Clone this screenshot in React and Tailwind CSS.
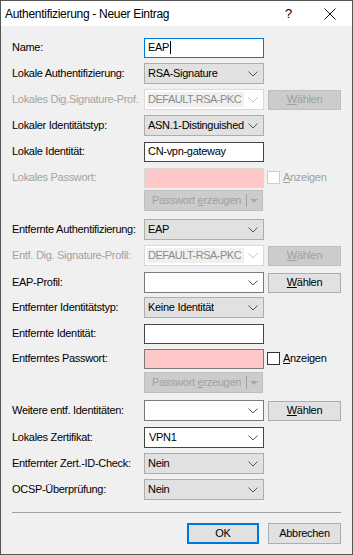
import React from 'react';

const font = { fontFamily: '"Liberation Sans", Arial, sans-serif' };

const Chevron = ({ light }) => (
  <svg width="10" height="6" viewBox="0 0 10 6" className="shrink-0">
    <path d="M0.5 0.5 L5 5 L9.5 0.5" fill="none" stroke={light ? '#c4c4c4' : '#555'} strokeWidth="1" />
  </svg>
);

const Label = ({ children, disabled }) => (
  <div className={`w-[132px] shrink-0 text-[11px] leading-none whitespace-nowrap ${disabled ? 'text-[#a3a3a3]' : 'text-black'}`}>
    {children}
  </div>
);

// grauer Combo (nur auswahl)
const Combo = ({ value }) => (
  <div className="w-[120px] h-full flex items-center justify-between bg-[#e1e1e1] border border-[#adadad] pl-[3px] pr-[5px] text-[11px] text-black">
    <span className="whitespace-nowrap">{value}</span>
    <Chevron />
  </div>
);

// weisser Combo (editierbar)
const EditCombo = ({ value, dark }) => (
  <div className={`w-[120px] h-full flex items-center justify-between bg-white border ${dark ? 'border-[#444]' : 'border-[#7a7a7a]'} pl-[4px] pr-[5px] text-[11px] text-black`}>
    <span className="whitespace-nowrap">{value}</span>
    <Chevron />
  </div>
);

const DisabledCombo = ({ value }) => (
  <div className="w-[120px] h-full flex items-center bg-white border border-[#d9d9d9] p-[2px] pr-[5px] text-[11px]">
    <div className="w-[97px] h-full flex items-center bg-[#f0f0f0] pl-[1px] text-[#8c8c8c] whitespace-nowrap tracking-[-0.5px]">{value}</div>
    <div className="ml-auto"><Chevron light /></div>
  </div>
);

const TextInput = ({ value, focus }) => (
  <div className={`w-[120px] h-[20px] flex items-center bg-white border ${focus ? 'border-[#0078d7]' : 'border-[#444]'} pl-[3px] text-[11px] text-black whitespace-nowrap`}>
    {value}
    {focus && <span className="w-px h-[13px] bg-black ml-[1px]" />}
  </div>
);

const Wählen = ({ disabled }) => (
  <div className={`ml-[4px] w-[73px] h-[20px] flex items-center justify-center border text-[11px] ${disabled ? 'bg-[#cccccc] border-[#bfbfbf] text-[#a0a0a0]' : 'bg-[#e1e1e1] border-[#adadad] text-black'}`}>
    <span><span className="underline">W</span>ählen</span>
  </div>
);

const Password = ({ disabled }) => (
  <div className={`w-[120px] h-[20px] bg-[#ffc8c8] border ${disabled ? 'border-[#d9d9d9]' : 'border-[#7a7a7a]'}`} />
);

const Anzeigen = ({ disabled }) => (
  <div className="flex items-center ml-[3px]">
    <div className={`w-[13px] h-[13px] bg-white border ${disabled ? 'border-[#cccccc]' : 'border-[#333]'}`} />
    <span className={`ml-[3px] text-[11px] ${disabled ? 'text-[#a0a0a0]' : 'text-black'}`}>
      <span className="underline">A</span>nzeigen
    </span>
  </div>
);

const Erzeugen = () => (
  <div className="w-[119px] h-[21px] flex items-center bg-[#cccccc] border border-[#bfbfbf] text-[11px] text-[#a0a0a0]">
    <span className="flex-1 text-center pl-[2px] whitespace-nowrap">Passwort <span className="underline">e</span>rzeugen</span>
    <span className="w-px h-[13px] bg-[#a0a0a0]" />
    <svg width="15" height="8" viewBox="0 0 15 8"><path d="M3 2 L11 2 L7 6 Z" fill="#a8a8a8" /></svg>
  </div>
);

const Row = ({ mt, label, disabled, children }) => (
  <div className="flex items-center h-[21px]" style={{ marginTop: mt }}>
    <Label disabled={disabled}>{label}</Label>
    <div className="flex items-center h-full">{children}</div>
  </div>
);

export default function App() {
  return (
    <div style={font} className="w-[353px] h-[555px] flex flex-col bg-[#f0f0f0] border border-[#555] select-none tracking-[-0.3px]">
      {/* Titelleiste */}
      <div className="h-[25px] shrink-0 bg-white flex items-center pl-[4px]">
        <span className="text-[12px] text-black">Authentifizierung - Neuer Eintrag</span>
        <span className="ml-auto text-[13px] text-black mr-[32px]">?</span>
        <svg width="12" height="12" viewBox="0 0 12 12" className="mr-[16px]">
          <path d="M0.5 0.5 L11.5 11.5 M11.5 0.5 L0.5 11.5" stroke="#111" strokeWidth="1" />
        </svg>
      </div>

      <div className="flex flex-col pl-[11px] pr-[11px]">
        <Row mt={11} label="Name:"><TextInput value="EAP" focus /></Row>
        <Row mt={5} label="Lokale Authentifizierung:"><Combo value="RSA-Signature" /></Row>
        <Row mt={5} label="Lokales Dig.Signature-Prof." disabled>
          <DisabledCombo value="DEFAULT-RSA-PKC" /><Wählen disabled />
        </Row>
        <Row mt={5} label="Lokaler Identitätstyp:"><Combo value="ASN.1-Distinguished" /></Row>
        <Row mt={5} label="Lokale Identität:"><TextInput value="CN-vpn-gateway" /></Row>
        <Row mt={5} label="Lokales Passwort:" disabled>
          <Password disabled /><Anzeigen disabled />
        </Row>
        <Row mt={2} label=""><Erzeugen /></Row>
        <Row mt={8} label="Entfernte Authentifizierung:"><Combo value="EAP" /></Row>
        <Row mt={5} label="Entf. Dig. Signature-Profil:" disabled>
          <DisabledCombo value="DEFAULT-RSA-PKC" /><Wählen disabled />
        </Row>
        <Row mt={6} label="EAP-Profil:"><EditCombo value="" /><Wählen /></Row>
        <Row mt={4} label="Entfernter Identitätstyp:"><Combo value="Keine Identität" /></Row>
        <Row mt={5} label="Entfernte Identität:"><TextInput value="" /></Row>
        <Row mt={4} label="Entferntes Passwort:"><Password /><Anzeigen /></Row>
        <Row mt={3} label=""><Erzeugen /></Row>
        <Row mt={7} label="Weitere entf. Identitäten:"><EditCombo value="" /><Wählen /></Row>
        <Row mt={6} label="Lokales Zertifikat:"><EditCombo value="VPN1" dark /></Row>
        <Row mt={5} label="Entfernter Zert.-ID-Check:"><Combo value="Nein" /></Row>
        <Row mt={5} label="OCSP-Überprüfung:"><Combo value="Nein" /></Row>

        <div className="mt-[12px] border-t border-[#a0a0a0]" />

        <div className="flex justify-end mt-[10px]">
          <div className="w-[72px] h-[21px] flex items-center justify-center bg-[#e1e1e1] border-2 border-[#0078d7] text-[11px] text-black">OK</div>
          <div className="ml-[9px] w-[73px] h-[21px] flex items-center justify-center bg-[#e1e1e1] border border-[#adadad] text-[11px] text-black">Abbrechen</div>
        </div>
      </div>
    </div>
  );
}
